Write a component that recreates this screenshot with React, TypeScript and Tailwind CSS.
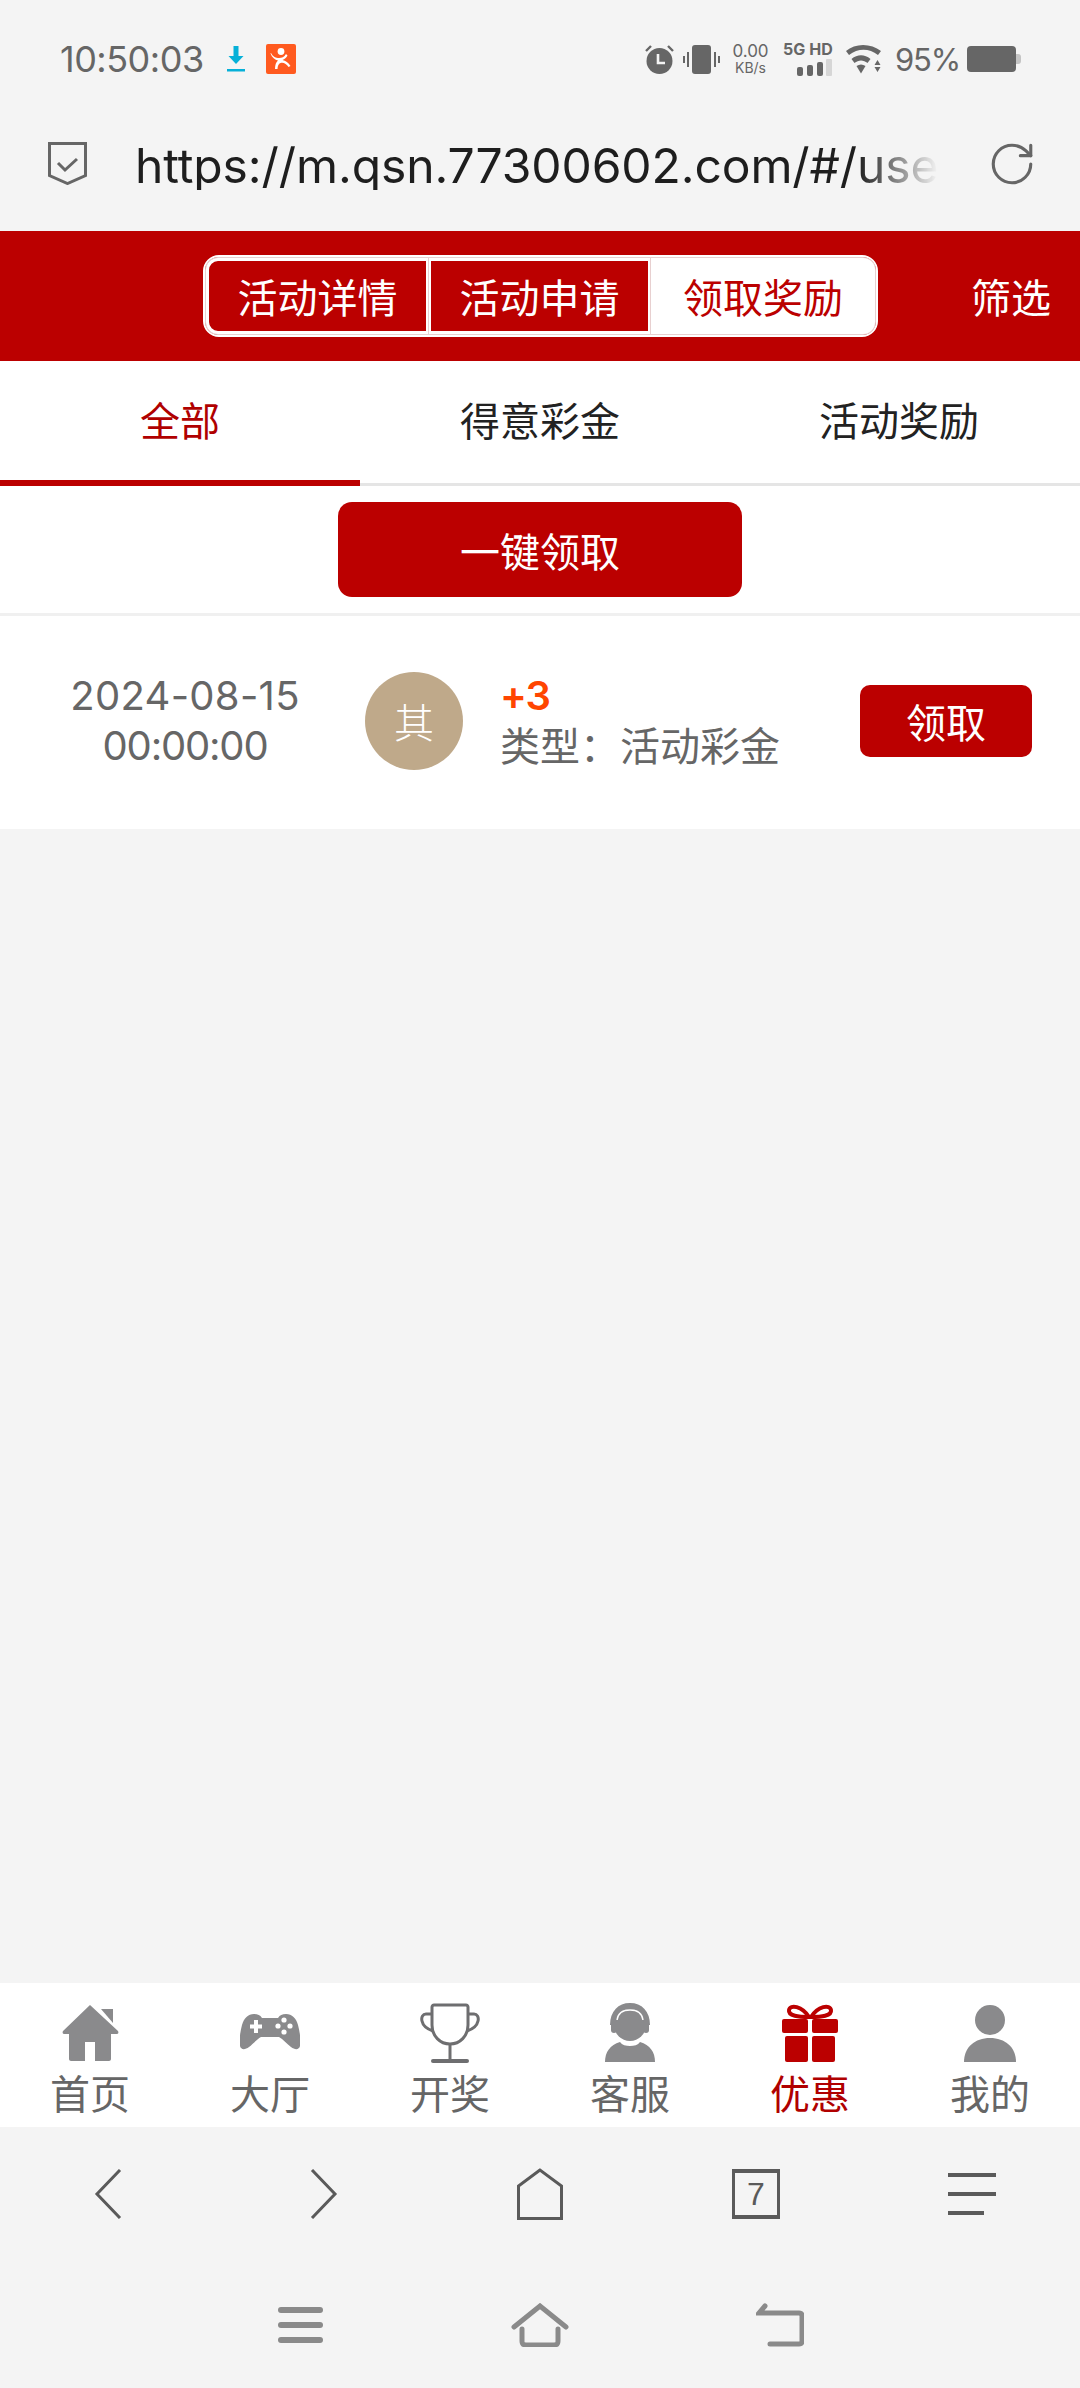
import { RotateCw } from "lucide-react";

const latin = "font-['Inter','Noto_Sans_CJK_SC',sans-serif]";
const cjk = "font-['Noto_Sans_CJK_SC','Noto_Sans',sans-serif]";

function StatusBar() {
  return (
    <div className={`flex h-[118px] items-center pl-[60px] pr-[59px] ${latin}`}>
      <span className="w-[144px] text-[36px] leading-none tracking-[-0.5px] text-[#666]">10:50:03</span>
      <svg viewBox="0 0 18 26" className="ml-[23px] h-[26px] w-[18px]">
        <path d="M6.5 0h5v10h5L9 18 1.500 10h5z" fill="#06b0d8" />
        <rect x="0" y="23" width="18" height="2.500" fill="#06b0d8" />
      </svg>
      <svg viewBox="0 0 30 30" className="ml-[21px] h-[30px] w-[30px]">
        <rect width="30" height="30" rx="2" fill="#ff5a1f" />
        <circle cx="15" cy="7.500" r="3.400" fill="#fff" />
        <path d="M5 9c2 4 5 5 8 5 3 0 5-1 7-4l1.500 1.500c-1 2-3 3.500-5 4.500 3 .5 6 2.500 8 6l-2 1c-2-3-5-5-8-4-2 .8-3 3-3 6H9c0-4 1-7 3-8.500-3-.5-6-3-7.500-7z" fill="#fff" />
      </svg>
      <div className="flex-1" />
      <svg viewBox="0 0 29 29" className="h-[29px] w-[29px]">
        <circle cx="14.500" cy="16" r="13" fill="#666" />
        <path d="M13 9v9h7" fill="none" stroke="#f4f4f4" strokeWidth="2.600" />
        <path d="M1 6l5-5M28 6l-5-5" stroke="#666" strokeWidth="2.400" />
      </svg>
      <svg viewBox="0 0 37 29" className="ml-[9px] h-[29px] w-[37px]">
        <rect x="9" y="0" width="19" height="29" rx="3" fill="#666" />
        <path d="M5 7v15M1 11v7M32 7v15M36 11v7" stroke="#666" strokeWidth="2" />
      </svg>
      <div className="ml-[12px] flex w-[37px] flex-col items-center leading-none text-[#666]">
        <span className="text-[17px]">0.00</span>
        <span className="mt-[1px] text-[14px]">KB/s</span>
      </div>
      <div className="ml-[15px] flex w-[49px] flex-col items-end">
        <span className="whitespace-nowrap text-[16px] font-bold leading-[15px] tracking-[0.1px] text-[#666]">5G HD</span>
        <svg viewBox="0 0 36 17" className="mt-[2px] h-[17px] w-[36px]">
          <rect x="0" y="8" width="6" height="9" rx="2" fill="#666" />
          <rect x="10" y="6" width="6" height="11" rx="2" fill="#666" />
          <rect x="20" y="3" width="6" height="14" rx="2" fill="#666" />
          <rect x="29" y="0" width="6" height="17" rx="1" fill="#d6d6d6" />
        </svg>
      </div>
      <svg viewBox="0 0 37 29" className="ml-[12px] h-[29px] w-[37px]">
        <path d="M1 6c9-8 25-8 35 0l-3 4c-9-7-20-7-29 0z" fill="#666" />
        <path d="M6.500 14c6-5 13-5 19 0l-3 4c-4-3.500-9-3.500-13 0z" fill="#666" />
        <path d="M11.500 21c3-2 6-2 9 0l-4.500 7.500z" fill="#666" />
        <path d="M32.500 15l-3 5h6zM29.500 22h6l-3 5z" fill="#666" />
      </svg>
      <span className="ml-[13px] w-[61px] whitespace-nowrap text-[31px] leading-none tracking-[-1.200px] text-[#666]">95%</span>
      <svg viewBox="0 0 54 26" className="ml-[11px] h-[26px] w-[54px]">
        <rect width="49" height="26" rx="4" fill="#666" />
        <path d="M49 8h2c2 0 3 1 3 3v4c0 2-1 3-3 3h-2z" fill="#c4c4c4" />
      </svg>
    </div>
  );
}

function UrlBar() {
  return (
    <div className="mb-[22px] flex h-[91px] items-center pl-[48px] pr-[43px]">
      <svg viewBox="0 0 39 43" className="h-[43px] w-[39px]">
        <path d="M1.500 1.500h36v32L19.500 41.500 1.500 33.500z" fill="none" stroke="#666" strokeWidth="3" />
        <path d="M10 21l7 7 12-11" fill="none" stroke="#666" strokeWidth="3" />
      </svg>
      <span className={`ml-[48px] whitespace-nowrap pt-[4px] text-[48px] leading-none tracking-[-0.1px] text-[#1e1e1e] [mask-image:linear-gradient(to_right,#000_90%,transparent_100%)] ${latin}`}>
        https://m.qsn.77300602.com/#/use
      </span>
      <div className="flex-1" />
      <RotateCw className="h-[50px] w-[50px] text-[#666]" strokeWidth={1.500} />
    </div>
  );
}

function RedHeader() {
  return (
    <div className={`flex h-[130px] items-center bg-[#bb0000] text-[40px] text-white ${cjk}`}>
      <div className="ml-[203px] h-[82px] w-[675px] rounded-[16px] border-2 border-white p-px">
        <div className="flex h-full gap-px overflow-hidden rounded-[12px] bg-[#e8d0d0] ring-1 ring-[#e8d0d0]">
          <div className="flex w-[222px] items-center justify-center rounded-l-[12px] border-y-[3px] border-r-2 border-l-[3px] border-white bg-[#bb0000]">活动详情</div>
          <div className="flex w-[221px] items-center justify-center border-y-[3px] border-x-2 border-white bg-[#bb0000]">活动申请</div>
          <div className="flex flex-1 items-center justify-center bg-white text-[#bb0000]">领取奖励</div>
        </div>
      </div>
      <span className="ml-[93px]">筛选</span>
    </div>
  );
}

function Tabs() {
  return (
    <div className={`grid h-[125px] grid-cols-3 border-b-[3px] border-[#e5e5e5] bg-white text-[40px] text-[#222] ${cjk}`}>
      <div className="-mb-[3px] flex items-center justify-center border-b-[6px] border-[#bb0000] pb-[3px] text-[#b00000]">全部</div>
      <div className="flex items-center justify-center pb-[6px]">得意彩金</div>
      <div className="flex items-center justify-center pb-[6px] pr-[2px]">活动奖励</div>
    </div>
  );
}

function RewardRow() {
  return (
    <div className="flex h-[213px] items-center bg-white pb-[3px]">
      <div className={`ml-[50px] w-[270px] text-center text-[40px] leading-[50px] text-[#666] ${latin}`}>
        <div className="tracking-[0.3px]">2024-08-15</div>
        <div className="tracking-[-1.2px]">00:00:00</div>
      </div>
      <div className={`ml-[45px] flex h-[98px] w-[98px] items-center justify-center rounded-full bg-[#bfa98a] text-[40px] font-light text-white ${cjk}`}>其</div>
      <div className="ml-[37px] flex-1">
        <div className={`text-[40px] font-semibold leading-[46px] tracking-[-1px] text-[#ff4500] ${latin}`}>+3</div>
        <div className={`text-[40px] leading-[50px] text-[#666] ${cjk}`}>类型：活动彩金</div>
      </div>
      <div className={`mr-[48px] flex h-[72px] w-[172px] items-center justify-center rounded-[10px] bg-[#bb0000] text-[40px] text-white ${cjk}`}>领取</div>
    </div>
  );
}

const tabItems = [
  {
    label: "首页",
    icon: (
      <svg viewBox="0 0 60 60" className="h-[60px] w-[60px]">
        <path d="M30 2 3 28c-1 2 0 3 2 3h4v25c0 1 1 2 2 2h14V39h10v19h14c1 0 2-1 2-2V31h5c2 0 3-1 2-3L30 2z" fill="#8a8a8c" />
        <path d="M41 6h12v14z" fill="#8a8a8c" />
      </svg>
    ),
  },
  {
    label: "大厅",
    icon: (
      <svg viewBox="0 0 60 60" className="h-[60px] w-[60px]">
        <path d="M14 11c4 0 6 1 8 4h16c2-3 4-4 8-4 6 0 10 4 12 11 2 8 3 15 2 21-1 4-5 4-9 1-4-3-8-8-12-10H21c-4 2-8 7-12 10-4 3-8 3-9-1-1-6 0-13 2-21 2-7 6-11 12-11z" fill="#8a8a8c" />
        <path d="M16 17v13M10 23.500h12" stroke="#fff" strokeWidth="4" />
        <circle cx="44" cy="17" r="2.600" fill="#fff" />
        <circle cx="44" cy="29" r="2.600" fill="#fff" />
        <circle cx="38" cy="23" r="2.600" fill="#fff" />
        <circle cx="50" cy="23" r="2.600" fill="#fff" />
      </svg>
    ),
  },
  {
    label: "开奖",
    icon: (
      <svg viewBox="0 0 60 60" className="h-[60px] w-[60px]" fill="none" stroke="#6e6e70" strokeWidth="3">
        <path d="M14 2h32c1 0 2 1 2 2v18c0 11-8 19-18 19s-18-8-18-19V4c0-1 1-2 2-2z" />
        <path d="M12 11H6C3 11 1 14 2 18c1 5 5 8 11 10M48 11h6c3 0 5 3 4 7-1 5-5 8-11 10" />
        <path d="M30 41v17" />
        <path d="M13 58h34" strokeLinecap="round" strokeWidth="4" />
      </svg>
    ),
  },
  {
    label: "客服",
    icon: (
      <svg viewBox="0 0 60 60" className="h-[60px] w-[60px]">
        <circle cx="30" cy="22" r="16" fill="#8a8a8c" />
        <path d="M13 22C13 10 20 3 30 3s17 7 17 19" fill="none" stroke="#8a8a8c" strokeWidth="6" />
        <path d="M17 17C18 10 23 7 30 7s12 3 13 10" fill="none" stroke="#fff" strokeWidth="1.500" />
        <rect x="11" y="16" width="6" height="14" rx="3" fill="#8a8a8c" />
        <rect x="43" y="16" width="6" height="14" rx="3" fill="#8a8a8c" />
        <path d="M46 30c0 6-4 9-9 9h-6" fill="none" stroke="#fff" strokeWidth="2" />
        <path d="M5 59c0-10 5-17 15-20 2 3 6 4 10 4s8-1 10-4c10 3 15 10 15 20z" fill="#8a8a8c" />
      </svg>
    ),
  },
  {
    label: "优惠",
    icon: (
      <svg viewBox="0 0 60 60" className="h-[60px] w-[60px]">
        <path d="M29 14C22 3 10 1 9 7c-1 6 10 7 20 7zM31 14C38 3 50 1 51 7c1 6-10 7-20 7z" fill="none" stroke="#bb0000" strokeWidth="4" />
        <rect x="2" y="16" width="26" height="14" rx="2" fill="#bb0000" />
        <rect x="32" y="16" width="26" height="14" rx="2" fill="#bb0000" />
        <rect x="5" y="33" width="23" height="26" rx="2" fill="#bb0000" />
        <rect x="32" y="33" width="23" height="26" rx="2" fill="#bb0000" />
      </svg>
    ),
  },
  {
    label: "我的",
    icon: (
      <svg viewBox="0 0 60 60" className="h-[60px] w-[60px]">
        <circle cx="30" cy="17" r="15" fill="#8a8a8c" />
        <path d="M4 59c0-15 11-24 26-24s26 9 26 24z" fill="#8a8a8c" />
      </svg>
    ),
  },
];

function BottomTabs() {
  return (
    <div className={`grid h-[144px] grid-cols-6 bg-white ${cjk}`}>
      {tabItems.map((t) => (
        <div key={t.label} className="flex flex-col items-center pt-[20px]">
          {t.icon}
          <span className={`mt-[5px] text-[40px] leading-[48px] ${t.label === "优惠" ? "text-[#b00000]" : "text-[#666]"}`}>{t.label}</span>
        </div>
      ))}
    </div>
  );
}

function BrowserBar() {
  return (
    <div className="grid h-[134px] grid-cols-5 items-center text-[#5a5a5a]">
      <div className="flex justify-center">
        <svg viewBox="0 0 28 50" className="h-[50px] w-[28px]" fill="none" stroke="#5a5a5a" strokeWidth="3">
          <path d="M26 1 3 25l23 24" />
        </svg>
      </div>
      <div className="flex justify-center">
        <svg viewBox="0 0 28 50" className="h-[50px] w-[28px]" fill="none" stroke="#5a5a5a" strokeWidth="3">
          <path d="M2 1l23 24L2 49" />
        </svg>
      </div>
      <div className="flex justify-center">
        <svg viewBox="0 0 46 52" className="h-[52px] w-[46px]" fill="none" stroke="#5a5a5a" strokeWidth="3">
          <path d="M23 2 1.500 18v32.500h43V18z" />
        </svg>
      </div>
      <div className="flex justify-center">
        <div className="flex h-[50px] w-[48px] items-center justify-center border-x-[3px] border-y-4 border-[#5a5a5a] font-['Liberation_Sans',sans-serif] text-[32px] leading-none">7</div>
      </div>
      <div className="flex justify-center">
        <div className="flex w-[48px] flex-col gap-[15px]">
          <div className="h-[4px] w-[48px] bg-[#5a5a5a]" />
          <div className="h-[4px] w-[48px] bg-[#5a5a5a]" />
          <div className="h-[4px] w-[36px] bg-[#5a5a5a]" />
        </div>
      </div>
    </div>
  );
}

function SystemNav() {
  return (
    <div className="grid h-[127px] grid-cols-3 items-center px-[180px]">
      <div className="flex justify-center">
        <div className="flex w-[45px] flex-col gap-[9px]">
          <div className="h-[6px] rounded-full bg-[#8a8a8a]" />
          <div className="h-[6px] rounded-full bg-[#8a8a8a]" />
          <div className="h-[6px] rounded-full bg-[#8a8a8a]" />
        </div>
      </div>
      <div className="flex justify-center">
        <svg viewBox="0 0 58 44" className="h-[44px] w-[58px]" fill="none" stroke="#8a8a8a" strokeWidth="5" strokeLinecap="round">
          <path d="M3 24 29 3l26 21" />
          <path d="M11 26v12c0 3 1 4 4 4h28c3 0 4-1 4-4V26" />
        </svg>
      </div>
      <div className="flex justify-center">
        <svg viewBox="0 0 48 44" className="h-[44px] w-[48px]" fill="none" stroke="#8a8a8a" strokeWidth="5" strokeLinecap="round">
          <path d="M9 3 3 10h40c2 0 3 1 3 3v25c0 2-1 3-3 3H14" />
        </svg>
      </div>
    </div>
  );
}

export default function App() {
  return (
    <div className="flex h-[2388px] w-[1080px] flex-col overflow-hidden bg-[#f4f4f4] font-['Noto_Sans_CJK_SC',sans-serif]">
      <StatusBar />
      <UrlBar />
      <RedHeader />
      <Tabs />
      <div className={`flex h-[130px] items-start justify-center border-b-[3px] border-[#f0f0f0] bg-white pt-[16px] ${cjk}`}>
        <div className="flex h-[95px] w-[404px] items-center justify-center rounded-[14px] bg-[#bb0000] text-[40px] text-white">一键领取</div>
      </div>
      <RewardRow />
      <div className="flex-1" />
      <BottomTabs />
      <BrowserBar />
      <SystemNav />
    </div>
  );
}
